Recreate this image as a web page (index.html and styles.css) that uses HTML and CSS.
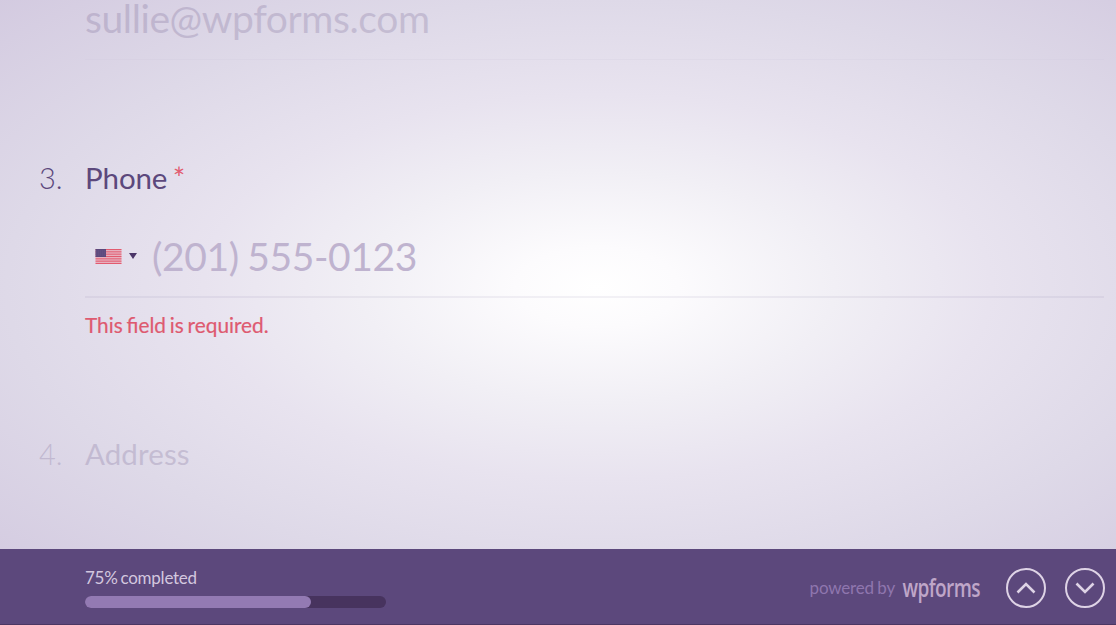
FILE: index.html
```html
<!DOCTYPE html>
<html lang="en">
<head>
    <meta charset="UTF-8">
    <meta name="viewport" content="width=device-width, initial-scale=1.0">
    <title>Conversational Form</title>
    <link rel="stylesheet" href="styles.css">
</head>
<body>
    <main class="form">
        <div class="field field-email inactive">
            <div class="field-body">
                <div class="input-row">sullie@wpforms.com</div>
            </div>
        </div>

        <div class="field field-phone">
            <span class="number">3.</span>
            <div class="field-body">
                <label class="label" for="phone">Phone <span class="required">*</span></label>
                <div class="input-row">
                    <svg class="flag" viewBox="0 0 26 15">
                        <rect width="26" height="15" fill="#e8cdd9"/>
                        <path d="M0 .6h26M0 2.9h26M0 5.2h26M0 7.5h26M0 9.8h26M0 12.1h26M0 14.4h26" stroke="#e25b70" stroke-width="1.3"/>
                        <rect width="10.5" height="8" fill="#5c487c"/>
                        <path d="M1 2h9M1 4h9M1 6h9" stroke="#8d79a9" stroke-width=".6" stroke-dasharray=".8 1.2"/>
                    </svg>
                    <span class="arrow"></span>
                    <input id="phone" type="tel" placeholder="(201) 555-0123">
                </div>
                <p class="error">This field is required.</p>
            </div>
        </div>

        <div class="field field-address inactive">
            <span class="number">4.</span>
            <div class="field-body">
                <span class="label">Address</span>
            </div>
        </div>
    </main>

    <footer class="footer">
        <div class="progress">
            <div class="progress-text">75% completed</div>
            <div class="progress-bar">
                <div class="progress-done" style="width: 75%"></div>
            </div>
        </div>
        <div class="powered">
            <span>powered by</span>
            <svg class="logo" width="80" height="44" viewBox="0 0 80 44">
                <text x="0.5" y="31" textLength="77.5" lengthAdjust="spacingAndGlyphs">wpforms</text>
            </svg>
        </div>
        <div class="nav">
            <button class="nav-button" aria-label="Previous">
                <svg width="20" height="12" viewBox="0 0 20 12"><path d="M1.5 10.5L10 2l8.5 8.5"/></svg>
            </button>
            <button class="nav-button" aria-label="Next">
                <svg width="20" height="12" viewBox="0 0 20 12"><path d="M1.5 1.5L10 10l8.5-8.5"/></svg>
            </button>
        </div>
    </footer>
</body>
</html>
```
FILE: styles.css
```css
* {
    box-sizing: border-box;
    margin: 0;
    padding: 0;
}

body {
    display: flex;
    flex-direction: column;
    height: 100vh;
    overflow: hidden;
    background: radial-gradient(820px 400px at 597px 287px, #ffffff 0%, #fcfbfd 10%, #f1eff5 29%, #e8e3ef 48%, #ded9e8 72%, #d3cae0 103%);
    font-family: Lato, sans-serif;
    color: #5c487c;
}

.form {
    flex: 1;
    min-height: 0;
    padding: 0 12px 0 39px;
    overflow: hidden;
}

.field {
    display: flex;
}

.inactive {
    opacity: 0.2;
}

.number {
    width: 46px;
    font-size: 29px;
    font-weight: 300;
    line-height: 36px;
}

.field-body {
    flex: 1;
}

.label {
    display: block;
    font-size: 29.5px;
    line-height: 36px;
    letter-spacing: -0.1px;
    word-spacing: -2px;
}

.required {
    color: #e25b70;
}

.input-row {
    display: flex;
    align-items: center;
    font-size: 39px;
    line-height: 48px;
    letter-spacing: -0.4px;
    word-spacing: -1px;
}

.field-email {
    height: 60px;
    margin-left: 46px;
}

.field-email .input-row {
    height: 60px;
    padding-bottom: 22px;
    border-bottom: 1px solid #cdc6dc;
    line-height: 37px;
}

.field-phone {
    margin-top: 100px;
}

.field-phone .input-row {
    height: 80px;
    margin-top: 22px;
    padding: 0 0 2px 10px;
    border-bottom: 2px solid rgba(92, 72, 124, 0.07);
}

.flag {
    width: 27px;
    height: 15px;
}

.arrow {
    margin: 0 15px 0 7px;
    border-top: 6px solid #4b3568;
    border-left: 4px solid transparent;
    border-right: 4px solid transparent;
}

input {
    flex: 1;
    border: none;
    outline: none;
    background: none;
    font: inherit;
    letter-spacing: inherit;
    word-spacing: inherit;
    color: inherit;
}

input::placeholder {
    color: #bfb3cf;
    opacity: 1;
}

.error {
    margin-top: 14px;
    font-size: 20.8px;
    line-height: 26px;
    word-spacing: -1.5px;
    color: #de5a70;
    -webkit-text-stroke: 0.2px #de5a70;
}

.field-address {
    margin-top: 98px;
}

.field-address .label {
    letter-spacing: 0.1px;
}

.footer {
    display: flex;
    align-items: center;
    height: 76px;
    padding: 2px 11px 0 85px;
    background-color: #5c487c;
    border-bottom: 1px solid #4b3763;
}

.progress {
    width: 301px;
    margin-right: auto;
}

.progress-text {
    font-size: 17px;
    line-height: 20px;
    letter-spacing: -0.25px;
    word-spacing: -1.2px;
    color: #d3c7df;
}

.progress-bar {
    height: 12px;
    margin-top: 8px;
    border-radius: 6px;
    background-color: #47335e;
}

.progress-done {
    height: 100%;
    border-radius: 6px;
    background-color: #937ab3;
}

.powered {
    display: flex;
    align-items: center;
    gap: 7px;
    font-size: 17px;
    letter-spacing: -0.2px;
    word-spacing: -0.6px;
    color: #8f76ae;
}

.logo text {
    font-family: "Open Sans", sans-serif;
    font-size: 26px;
    font-weight: 600;
    letter-spacing: -0.8px;
    fill: #bfa6c8;
}

.nav {
    display: flex;
    gap: 19px;
    margin-left: 24px;
}

.nav-button {
    display: flex;
    align-items: center;
    justify-content: center;
    width: 40px;
    height: 40px;
    border: 2px solid #ded3e6;
    border-radius: 50%;
    background: none;
}

.nav-button path {
    fill: none;
    stroke: #ded3e6;
    stroke-width: 2.6;
}
```
